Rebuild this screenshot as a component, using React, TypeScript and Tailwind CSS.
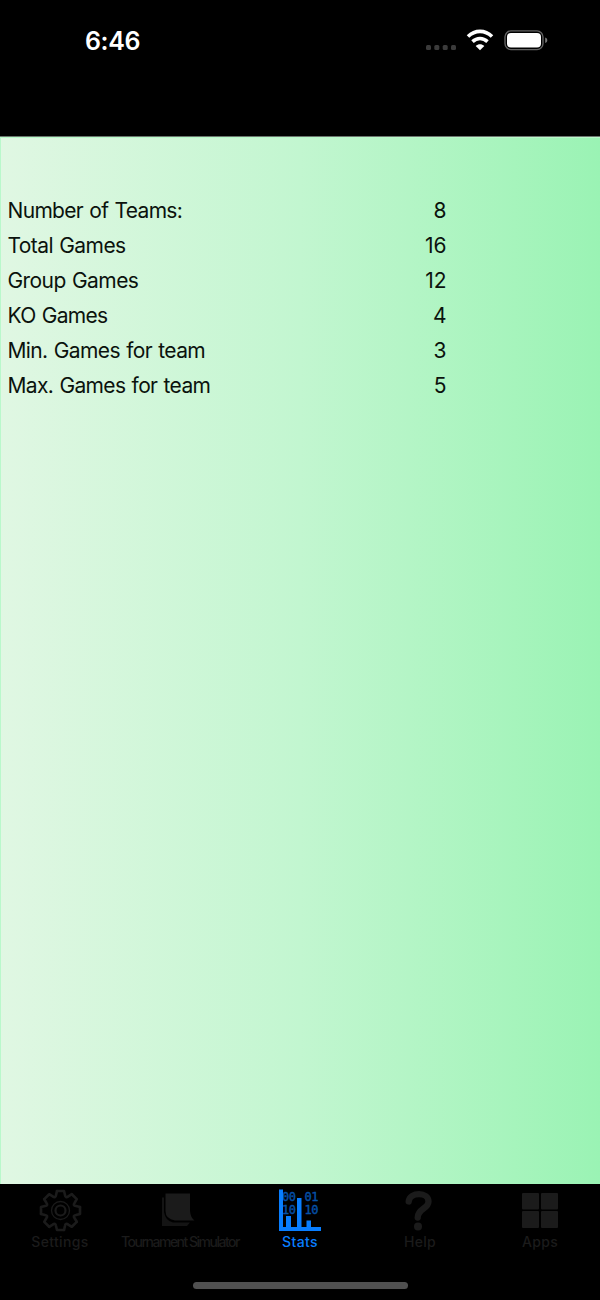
import type { ReactNode } from "react";
import { clsx } from "clsx";

const stats = [
  { label: "Number of Teams:", value: 8, tracking: "tracking-[-0.68px]" },
  { label: "Total Games", value: 16, tracking: "tracking-[-0.58px]" },
  { label: "Group Games", value: 12, tracking: "tracking-[-0.58px]" },
  { label: "KO Games", value: 4, tracking: "tracking-[-0.7px]" },
  { label: "Min. Games for team", value: 3, tracking: "tracking-[-0.62px]" },
  { label: "Max. Games for team", value: 5, tracking: "tracking-[-0.65px]" },
];

const toothAngles = [0, 45, 90, 135, 180, 225, 270, 315];

const GearIcon = () => (
  <svg width="44" height="44" viewBox="-22.500 -22.500 44 44" fill="none" stroke="currentColor">
    {toothAngles.map((angle) => (
      <path
        key={angle}
        d="M-3.5 -19.5H3.5L4.5 -15.5Q5 -12 7.8 -14.1L11.3 -16.3"
        strokeWidth="2.6"
        strokeLinejoin="round"
        strokeLinecap="round"
        transform={`rotate(${angle})`}
      />
    ))}
    <circle r="9" strokeWidth="1.3" />
    <circle r="5" strokeWidth="2.2" />
  </svg>
);

const PagesIcon = () => (
  <svg width="44" height="44" viewBox="0 0 44 44" fill="currentColor">
    <path d="M7.500 5.500H32V23Q32.500 29.500 36.500 32.500H17Q7.500 31 7.500 23Z" />
    <path d="M4 9.500H6V24Q7.500 33 15 34.500H32L29 38H4Z" opacity="0.75" />
  </svg>
);

const ChartIcon = () => (
  <svg width="44" height="44" viewBox="0 0 44 44" fill="currentColor">
    <g
      opacity="0.65"
      stroke="currentColor"
      strokeWidth="0.35"
      className="font-['DejaVu_Sans_Mono',monospace] text-[12px] tracking-normal"
    >
      <text x="4" y="13" textLength="14">00</text>
      <text x="26.500" y="13" textLength="14">01</text>
      <text x="4" y="25.500" textLength="14">10</text>
      <text x="26.500" y="25.500" textLength="14">10</text>
    </g>
    <path d="M1 1.500H5V39H43V43H1Z" />
    <path d="M8 28H13V40H8ZM19 10H23.500V40H19ZM28.500 32.500H33V40H28.500Z" />
  </svg>
);

const HelpIcon = () => (
  <svg width="44" height="44" viewBox="0 0 44 44" fill="none">
    <path
      d="M10.700 13.500C12 3.500 30.500 4 30.500 13.500C30.500 21 19.700 20.500 19.700 29.500"
      stroke="currentColor"
      strokeWidth="6.300"
      strokeLinecap="round"
    />
    <circle cx="20" cy="38.500" r="4" fill="currentColor" />
  </svg>
);

const AppsIcon = () => (
  <svg width="44" height="44" viewBox="0 0 44 44" fill="currentColor">
    <rect x="4" y="5" width="17" height="16.500" rx="1" />
    <rect x="23" y="5" width="17" height="16.500" rx="1" />
    <rect x="4" y="23" width="17" height="17" rx="1" />
    <rect x="23" y="23" width="17" height="17" rx="1" />
  </svg>
);

const StatusBar = () => (
  <header className="flex h-[137px] items-start justify-between border-b border-[#6d756f] bg-black pr-[52px] pl-[85px] text-white">
    <span className="mt-[26px] text-[25px] leading-[31px] font-semibold tracking-[-0.4px]">6:46</span>

    <div className="mt-[28px] flex h-6 items-center">
      <svg width="32" height="24" viewBox="0 0 32 24" fill="#3b3b3b">
        <rect x="1" y="17" width="5" height="5" rx="1.500" />
        <rect x="9.300" y="17" width="5" height="5" rx="1.500" />
        <rect x="17.700" y="17" width="5" height="5" rx="1.500" />
        <rect x="26" y="17" width="5" height="5" rx="1.500" />
      </svg>

      <svg className="ml-[9px]" width="28" height="24" viewBox="0 0 28 24" fill="none" stroke="white" strokeWidth="3.600">
        <path d="M2 8.500C9 1.700 19 1.700 26 8.500" />
        <path d="M6.500 13.600C11 9.500 17 9.500 21.500 13.600" />
        <path d="M14 22.300L9.700 18C12.300 15.500 15.700 15.500 18.300 18Z" fill="white" stroke="none" />
      </svg>

      <svg className="ml-[10px]" width="44" height="24" viewBox="0 0 44 24">
        <rect x="1" y="2.900" width="38" height="18.700" rx="6" fill="none" stroke="#626262" strokeWidth="1.400" />
        <rect x="3" y="5" width="34" height="14.500" rx="4" fill="white" />
        <path d="M41.200 9.500C44 10.300 44 14.200 41.200 15Z" fill="#7a7a7a" />
      </svg>
    </div>
  </header>
);

interface TabProps {
  icon: ReactNode;
  label: string;
  active?: boolean;
  className?: string;
}

const Tab = ({ icon, label, active, className }: TabProps) => (
  <button
    className={clsx(
      "flex w-[120px] flex-col items-center pt-1 text-[14px] leading-[18px] font-medium whitespace-nowrap",
      active ? "text-[#087eff]" : "text-[#1b1b1b]",
      className ?? "tracking-[0.35px]",
    )}
  >
    {icon}
    <span className="mt-[1px]">{label}</span>
  </button>
);

export default function App() {
  return (
    <div className="flex h-[1300px] w-[600px] flex-col bg-black font-[Inter,sans-serif]">
      <StatusBar />

      <main className="flex-1 border-t border-l border-t-[#b7fac9] border-l-[#b9f8cb] bg-linear-to-r from-[#e0f7e3] via-[#c2f6d0] to-[#9af3b4] pt-[56px] pl-[6.5px] text-[21px] leading-[34.9px] text-[#0b120d]">
        {stats.map((stat) => (
          <div key={stat.label} className="flex w-[439px] justify-between">
            <span className={clsx("[word-spacing:1px]", stat.tracking)}>{stat.label}</span>
            <span>{stat.value}</span>
          </div>
        ))}
      </main>

      <nav className="flex h-[116px] flex-col items-center justify-between bg-black pb-[11px]">
        <div className="flex">
          <Tab icon={<GearIcon />} label="Settings" />
          <Tab icon={<PagesIcon />} label="Tournament Simulator" className="tracking-[-1.5px]" />
          <Tab icon={<ChartIcon />} label="Stats" active />
          <Tab icon={<HelpIcon />} label="Help" />
          <Tab icon={<AppsIcon />} label="Apps" />
        </div>
        <div className="h-[7px] w-[215px] rounded-full bg-[#505050]" />
      </nav>
    </div>
  );
}
